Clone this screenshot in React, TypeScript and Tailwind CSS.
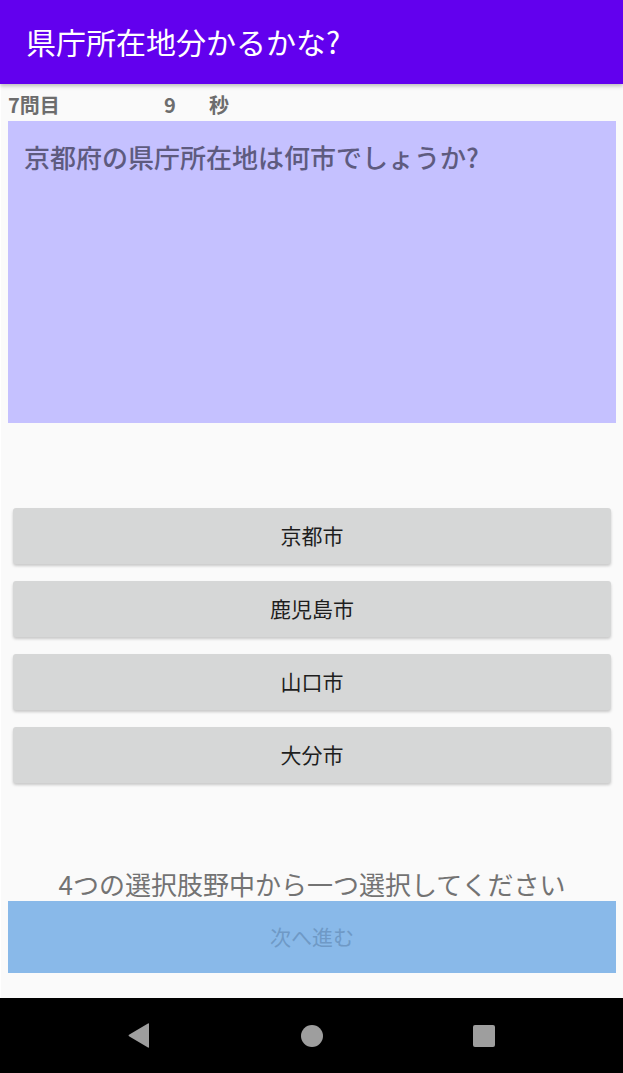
import React from "react";

const choices = ["京都市", "鹿児島市", "山口市", "大分市"];

const jp = { fontFamily: '"Noto Sans CJK JP", "Noto Sans", sans-serif' };

const NavBar: React.FC = () => (
  <div className="flex h-[75px] w-full items-center bg-black">
    <div className="flex w-full items-center justify-between pl-[128px] pr-[128px]">
      <svg width="22" height="25" viewBox="0 0 22 25">
        <path d="M21 1 L21 24 Q21 25 20 24.5 L1 13.2 Q0 12.5 1 11.8 L20 0.5 Q21 0 21 1 Z" fill="#9e9e9e" />
      </svg>
      <div className="h-[22px] w-[22px] rounded-full bg-[#9e9e9e]" />
      <div className="h-[22px] w-[22px] rounded-[2px] bg-[#9e9e9e]" />
    </div>
  </div>
);

export default function App() {
  return (
    <div className="flex h-[1073px] w-[623px] flex-col bg-[#fafafa]" style={jp}>
      {/* app bar */}
      <div className="relative z-10 flex h-[84px] shrink-0 items-center bg-[#6200ee] pb-[2px] pl-[26px] shadow-[0_2px_4px_rgba(0,0,0,0.25)]">
        <h1 className="text-[30px] leading-none text-white">県庁所在地分かるかな?</h1>
      </div>

      <div className="flex flex-1 flex-col border-l border-white pl-[7px] pr-[7px]">
        {/* status row */}
        <div className="flex h-[37px] items-end pb-[2px] text-[20px] font-bold leading-[28px] text-[#6d6d6d]">
          <span className="w-[156px]">7問目</span>
          <span className="w-[45px]">9</span>
          <span>秒</span>
        </div>

        {/* question */}
        <div className="h-[302px] bg-[#c5c1ff] px-[16px] pt-[18px]">
          <p className="text-[26px] font-medium leading-[36px] text-[#5e5b7f]">
            京都府の県庁所在地は何市でしょうか?
          </p>
        </div>

        {/* choices */}
        <div className="mt-[85px] flex flex-col gap-[17px] px-[5px]">
          {choices.map((c) => (
            <button
              key={c}
              className="flex h-[56px] w-full items-center justify-center rounded-[3px] bg-[#d6d7d7] text-[21px] text-[#1e1e1e] shadow-[0_2px_3px_rgba(0,0,0,0.2)]"
            >
              {c}
            </button>
          ))}
        </div>

        {/* footer */}
        <p className="mt-[84px] text-center text-[26px] leading-[34px] text-[#737373]">
          4つの選択肢野中から一つ選択してください
        </p>
        <div className="flex h-[72px] items-center justify-center bg-[#89b9e9] text-[21px] text-[#6f99c6]">
          次へ進む
        </div>
      </div>

      <NavBar />
    </div>
  );
}
